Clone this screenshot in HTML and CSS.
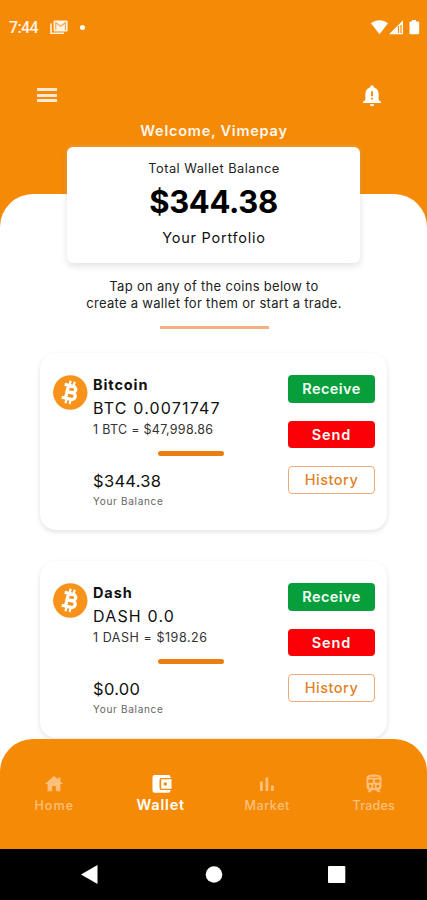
FILE: index.html
```html
<!DOCTYPE html>
<html lang="en">
<head>
<meta charset="utf-8">
<title>Wallet</title>
<link rel="stylesheet" href="styles.css">
</head>
<body>
<svg width="0" height="0" class="defs">
  <symbol id="btc" viewBox="0 0 35 35">
    <circle cx="17.3" cy="17.5" r="17.2" fill="#f7931a"/>
    <g transform="rotate(13 17.5 17.5)" fill="none" stroke="#fff" stroke-width="3.300">
      <path d="M14 10.800V24.200M10 10.900h8.800a3.200 3.200 0 0 1 0 6.400H14h5.600a3.400 3.400 0 0 1 0 6.800H10"/>
      <path stroke-width="2.200" d="M15 6v4.500M19.200 6v4.500M15 24.500v4.500M19.200 24.500v4.500"/>
    </g>
  </symbol>
</svg>
<div class="screen">
  <div class="status">
    <span class="time">7:44</span>
    <svg class="mail" width="18" height="15" viewBox="0 0 18 15"><path d="M1 3.500V13.300H14" fill="none" stroke="#fff3e6" stroke-width="1.600"/><rect x="3.600" y=".4" width="14" height="11.200" rx="1" fill="#fff3e6"/><path d="M5.800 10V2.600l4.800 3.600 4.800-3.600V10" fill="none" stroke="#f5a849" stroke-width="1.100"/></svg>
    <i class="dot"></i>
    <svg class="signals" width="49" height="15" viewBox="0 0 49 15" fill="#fff">
      <path d="M0 3.3C4.8-.7 12.200-.7 17 3.300L8.500 14.200z"/>
      <path d="M18 14.200L32 .2V14.200z"/><path d="M27.500 6V13M30 5V13" stroke="#f58a07" stroke-width="1.200"/>
      <path d="M41 1.400V0h4v1.400h2.200a1 1 0 0 1 1 1V13.200a1 1 0 0 1-1 1H39.500a1 1 0 0 1-1-1V2.400a1 1 0 0 1 1-1z"/>
    </svg>
  </div>
  <div class="appbar">
    <div class="menu"><i></i><i></i><i></i></div>
    <svg width="20" height="22" viewBox="0 0 20 22"><path fill="#fff" d="M10 .3c1.100 0 1.700.8 1.700 1.900 3 .8 4.900 3.300 4.900 6.500v6l2.400 2.400v1H1v-1l2.400-2.400v-6c0-3.200 1.900-5.700 4.900-6.500C8.300 1.100 8.900.3 10 .3zM7.900 19.200h4.200a2.100 2.100 0 0 1-4.200 0z"/><path fill="#f38b0c" d="M9.100 6.200h1.900v5H9.100zM9.100 12.700h1.900v1.900H9.100z"/></svg>
  </div>
  <h1 class="welcome">Welcome, Vimepay</h1>
  <main class="sheet">
    <section class="balance">
      <div class="label">Total Wallet Balance</div>
      <div class="total">$344.38</div>
      <div class="portfolio">Your Portfolio</div>
    </section>
    <p class="hint">Tap on any of the coins below to<br><span>create a wallet for them or start a trade.</span></p>
    <div class="rule"></div>
    <article class="coin">
      <svg class="logo" width="35" height="35"><use href="#btc"/></svg>
      <div class="info">
        <div class="name">Bitcoin</div>
        <div class="amount">BTC 0.0071747</div>
        <div class="rate">1 BTC = $47,998.86</div>
        <div class="bar"></div>
        <div class="value">$344.38</div>
        <div class="caption">Your Balance</div>
      </div>
      <div class="actions">
        <button class="receive">Receive</button>
        <button class="send">Send</button>
        <button class="history">History</button>
      </div>
    </article>
    <article class="coin dash">
      <svg class="logo" width="35" height="35"><use href="#btc"/></svg>
      <div class="info">
        <div class="name">Dash</div>
        <div class="amount">DASH 0.0</div>
        <div class="rate">1 DASH = $198.26</div>
        <div class="bar"></div>
        <div class="value">$0.00</div>
        <div class="caption">Your Balance</div>
      </div>
      <div class="actions">
        <button class="receive">Receive</button>
        <button class="send">Send</button>
        <button class="history">History</button>
      </div>
    </article>
  </main>
  <div class="navwrap">
    <nav class="nav">
      <a class="home"><svg width="18" height="20" viewBox="0 0 18 20"><path d="M9 2L0 10h2.600v7.300h4.600V12h3.600v5.300h4.600V10H18l-2.600-2.400V3.400h-2.200v2.200z"/></svg><span>Home</span></a>
      <a class="wallet"><svg width="20" height="20" viewBox="0 0 20 20"><path fill-rule="evenodd" d="M2.500 1H16.500a2 2 0 0 1 2 2v1H9.500a2 2 0 0 0-2 2v8a2 2 0 0 0 2 2h9v.8a2 2 0 0 1-2 2h-14a2 2 0 0 1-2-2V3a2 2 0 0 1 2-2zM9.200 5.300H19.500V14.700H9.200zM13.300 8.300a1.700 1.700 0 1 0 .01 0z"/></svg><span>Wallet</span></a>
      <a class="market"><svg width="16" height="20" viewBox="0 0 16 20"><path d="M1 7.500h2.800V17H1zM6.500 3.500h2.800V17H6.500zM12 11.500h2.800V17H12z"/></svg><span>Market</span></a>
      <a class="trades"><svg width="18" height="20" viewBox="0 0 18 20"><path fill-rule="evenodd" d="M9 .5c4.500 0 7.500.8 7.500 4v8.200a3.400 3.400 0 0 1-2.600 3.300l1.300 1.500v.7h-2.400L11 16.200H7l-1.800 2H2.800v-.7L4.100 16a3.400 3.400 0 0 1-2.600-3.300V4.500C1.500 1.300 4.500.5 9 .5zM4.500 2.700v1h9v-1zM3.300 5.500v3.300h4.600V5.500zM10.100 5.500v3.300h4.600V5.500zM5.200 10.800a1.400 1.400 0 1 0 .01 0zM12.800 10.800a1.400 1.400 0 1 0 .01 0zM8.200 10.500v3.500h1.600v-3.500z"/></svg><span>Trades</span></a>
    </nav>
  </div>
  <div class="system">
    <svg width="427" height="51" viewBox="0 0 427 51" fill="#fff"><path d="M81 25.500L97.500 16V35z"/><circle cx="214" cy="25.500" r="8.300"/><rect x="328" y="17" width="17.300" height="17" rx="1"/></svg>
  </div>
</div>
</body>
</html>
```
FILE: styles.css
```css
* { box-sizing: border-box; margin: 0; padding: 0; }
body { font-family: Inter, "Open Sans", sans-serif; color: #111; background: #f58a07; }
.defs { display: block; }
.screen { width: 427px; height: 900px; overflow: hidden; display: flex; flex-direction: column; background: #f58a07; }
.status { height: 56px; flex: none; display: flex; align-items: flex-start; padding: 20px 7px 0 9px; }
.time { font: 500 16px/16px Roboto, sans-serif; letter-spacing: -.6px; color: #fff3e6; width: 41px; }
.dot { width: 5px; height: 5px; border-radius: 50%; background: #fff; margin: 5px 0 0 12px; }
.signals { margin-left: auto; }
.appbar { height: 66px; flex: none; display: flex; justify-content: space-between; align-items: flex-start; padding: 29px 45px 0 37px; }
.menu { width: 20px; padding-top: 3px; display: grid; gap: 2.500px; }
.menu i { height: 3px; background: #ffe9d2; }
.welcome { flex: none; height: 72px; padding-left: 1px; font-size: 14.500px; line-height: 18px; font-weight: 600; letter-spacing: .77px; color: #fff6ec; text-align: center; }
.sheet { flex: none; height: 545px; background: #fff; border-radius: 33px 33px 0 0; display: flex; flex-direction: column; align-items: center; }
.balance { flex: none; width: 293px; height: 115.500px; margin-top: -47px; padding-top: 13px; background: #fff; border-radius: 6px; box-shadow: 0 3px 7px rgba(0,0,0,.12), 0 0 5px rgba(255,255,255,.3); text-align: center; }
.label { padding-left: 1px; font-size: 12.800px; line-height: 18px; letter-spacing: .48px; color: #222; }
.total { font-size: 31px; line-height: 47px; font-weight: 700; letter-spacing: -.34px; color: #000; }
.portfolio { padding-left: 1px; font-size: 14.500px; line-height: 26px; letter-spacing: .75px; }
.hint { margin-top: 15px; padding-left: 1px; font-size: 13px; line-height: 17.500px; letter-spacing: .3px; text-align: center; color: #222; }
.rule { flex: none; width: 109px; height: 3.500px; margin-top: 13px; margin-left: 1px; background: #f5b183; }
.coin { flex: none; width: 347px; height: 177px; margin-top: 24px; padding: 22px 12px 0 13px; border-radius: 16px; background: #fff; box-shadow: 0 2px 5px rgba(0,0,0,.12); display: flex; }
.coin.dash { margin-top: 31px; }
.logo { flex: none; }
.info { width: 200px; padding-left: 5px; margin-top: -1px; white-space: nowrap; }
.name { font-size: 14.500px; line-height: 22px; font-weight: 700; letter-spacing: .9px; }
.amount { font-size: 16px; line-height: 25px; letter-spacing: 1.180px; }
.rate { font-size: 12.500px; line-height: 17px; letter-spacing: .29px; color: #333; }
.dash .rate { letter-spacing: .55px; }
.bar { width: 66px; height: 5px; margin: 13px 0 14px 65px; border-radius: 3px; background: #ec7d10; }
.value { font-size: 16.500px; line-height: 22px; letter-spacing: .3px; }
.caption { font-size: 10px; line-height: 18px; letter-spacing: .7px; color: #666; }
.actions { width: 87px; margin-left: auto; display: flex; flex-direction: column; gap: 18px; }
.actions button { height: 27.500px; border: 0; border-radius: 4px; font: 600 14.500px/27px Inter, sans-serif; color: #f5fff8; }
.actions .receive { background: #079f3c; letter-spacing: .4px; }
.actions .send { background: #fb0007; letter-spacing: .9px; }
.actions .history { background: #fff; border: 1px solid #eda77c; color: #df8129; font-weight: 500; line-height: 25px; letter-spacing: .5px; }
.navwrap { flex: none; height: 110px; background: #fff; }
.nav { height: 110px; background: #f58a07; border-radius: 33px 33px 0 0; display: grid; grid-template-columns: repeat(4, 1fr); padding: 35px 0 0 1px; }
.nav a { display: flex; flex-direction: column; align-items: center; color: #fcc07c; font-size: 12.500px; line-height: 20px; font-weight: 500; }
.nav svg { fill: currentColor; display: block; }
.nav span { margin-top: 2px; }
.nav .wallet { color: #fff; font-size: 14.500px; font-weight: 600; letter-spacing: .8px; }
.nav .wallet svg { margin-left: 2px; }
.nav .wallet span { margin-top: 1px; }
.home { letter-spacing: 1.100px; }
.market { letter-spacing: .6px; }
.trades { letter-spacing: .2px; }
.system { flex: none; height: 51px; background: #000; }
.system svg { display: block; }
```
